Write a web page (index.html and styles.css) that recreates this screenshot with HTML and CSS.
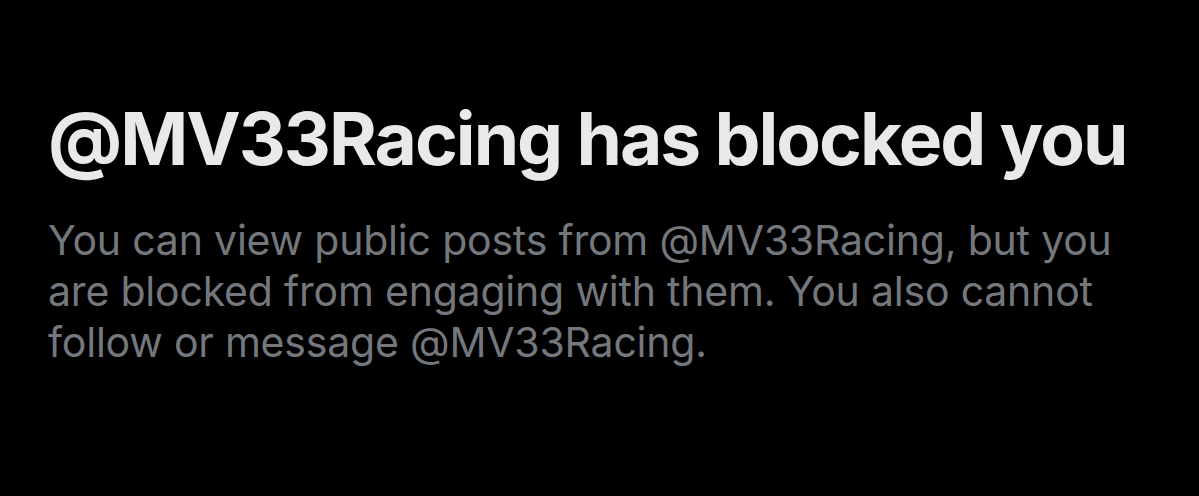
FILE: index.html
```html
<!DOCTYPE html>
<html lang="en">
<head>
    <meta charset="UTF-8">
    <meta name="viewport" content="width=device-width, initial-scale=1.0">
    <title>Blocked</title>
    <link rel="stylesheet" href="styles.css">
</head>
<body>
    <div class="container">
        <h1 class="title">@MV33Racing has blocked you</h1>
        <p class="message">You can view public posts from @MV33Racing, but you are blocked from engaging with them. You also cannot follow or message @MV33Racing.</p>
    </div>
</body>
</html>
```

FILE: styles.css
```css
body {
    margin: 0;
    background: #000;
    font-family: Inter, "Noto Sans", sans-serif;
    height: 100vh;
    overflow: hidden;
}

.container {
    padding: 92px 0 0 48px;
    width: 1090px;
}

.title {
    margin: 0;
    font-size: 73px;
    font-weight: 700;
    line-height: 94px;
    letter-spacing: -2px;
    color: #e7e9ea;
    white-space: nowrap;
}

.message {
    margin: 29px 0 0;
    font-size: 41px;
    font-weight: 400;
    line-height: 51px;
    letter-spacing: -0.2px;
    color: #74787d;
}
```
